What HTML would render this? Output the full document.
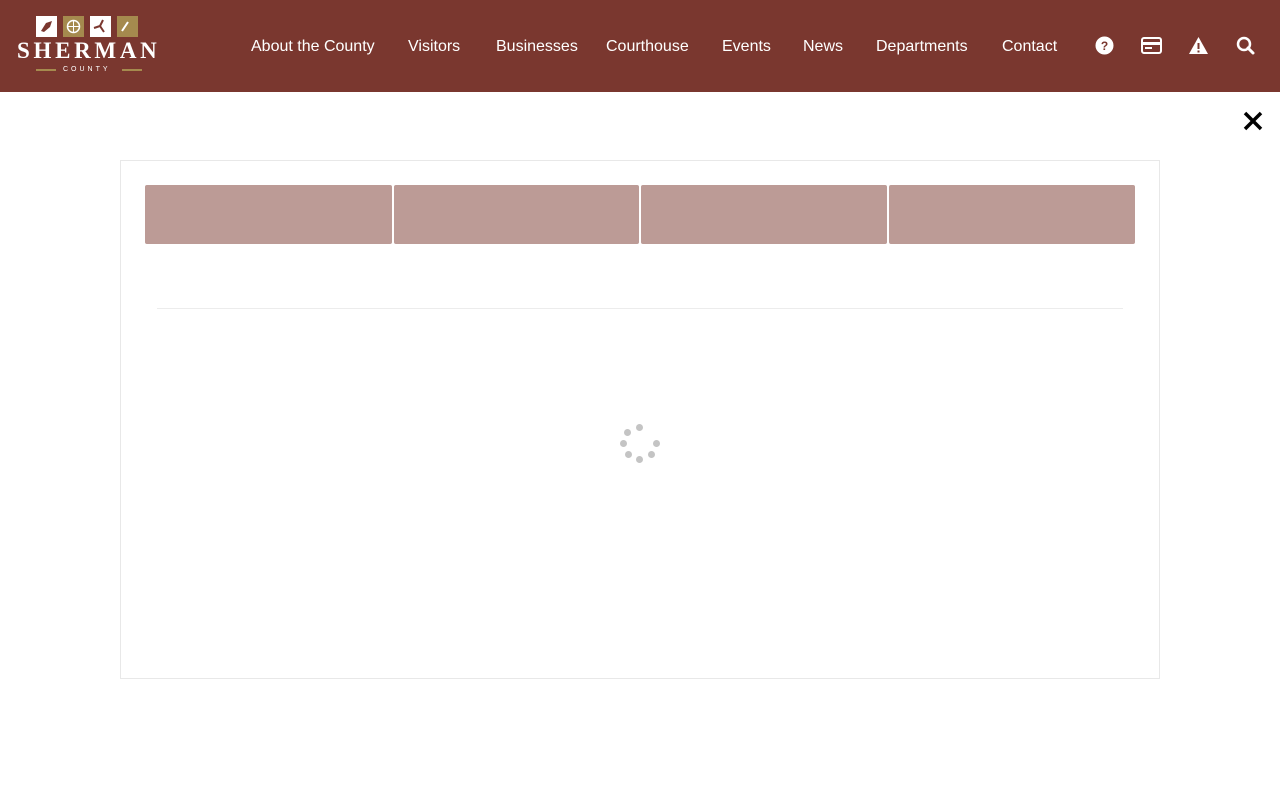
<!DOCTYPE html>
<html><head><meta charset="utf-8"><style>
*{margin:0;padding:0;box-sizing:border-box}
body{width:1280px;height:800px;background:#fff;font-family:"Liberation Sans",sans-serif;position:relative;overflow:hidden}
.hdr{position:absolute;left:0;top:0;width:1280px;height:92px;background:#7a372f}
.nav a{position:absolute;top:38px;color:#fff;font-size:16px;text-decoration:none;white-space:nowrap}
.box{position:absolute;left:120px;top:160px;width:1040px;height:519px;border:1px solid #e8e8e8}
.tab{position:absolute;top:185px;height:59px;background:#bc9b96;border-radius:2px}
.dot{position:absolute;width:7px;height:7px;border-radius:50%;background:#c4c4c4}
</style></head><body>
<div class="hdr">
<div style="position:absolute;left:36px;top:16px;width:21px;height:21px;background:#fff"></div>
<div style="position:absolute;left:63px;top:16px;width:21px;height:21px;background:#a58a4e"></div>
<div style="position:absolute;left:90px;top:16px;width:21px;height:21px;background:#fff"></div>
<div style="position:absolute;left:117px;top:16px;width:21px;height:21px;background:#a58a4e"></div>
<svg style="position:absolute;left:36px;top:16px" width="102" height="21"><path d="M5 15 L10 7 L16 5 L14 11 L8 16Z" fill="#7a372f"/><circle cx="37.5" cy="10.5" r="6" fill="none" stroke="#fff" stroke-width="1.5"/><path d="M31.5 10.5h12M37.5 4.5v12" stroke="#fff"/><path d="M58 12 L64 10 L67 4 M64 10 L68 16" stroke="#7a372f" stroke-width="2" fill="none"/><path d="M86 15 L92 6" stroke="#fff" stroke-width="2"/></svg>
<div style="position:absolute;left:17px;top:38px;color:#fff;font-family:'Liberation Serif',serif;font-weight:bold;font-size:23px;letter-spacing:3.7px">SHERMAN</div>
<div style="position:absolute;left:63px;top:66px;color:#fff;font-size:7px;letter-spacing:3px">COUNTY</div>
<div style="position:absolute;left:36px;top:69px;width:20px;height:2px;background:#a58a4e"></div>
<div style="position:absolute;left:122px;top:69px;width:20px;height:2px;background:#a58a4e"></div>
<div class="nav">
<a style="left:251px">About the County</a><a style="left:408px">Visitors</a><a style="left:496px">Businesses</a><a style="left:606px">Courthouse</a><a style="left:722px">Events</a><a style="left:803px">News</a><a style="left:876px">Departments</a><a style="left:1002px">Contact</a>
</div>
<svg style="position:absolute;left:1094px;top:35px" width="170" height="22">
<circle cx="10.5" cy="10.5" r="9" fill="#fff"/><text x="10.5" y="15" text-anchor="middle" font-size="12" font-weight="bold" fill="#7a372f" font-family="Liberation Sans">?</text>
<rect x="48" y="3" width="19" height="15" rx="2" fill="none" stroke="#fff" stroke-width="2"/><rect x="48" y="7" width="19" height="3" fill="#fff"/><rect x="51" y="12" width="7" height="2" fill="#fff"/>
<path d="M104.5 2 L114 19 L95 19Z" fill="#fff"/><rect x="103.5" y="8" width="2" height="6" fill="#7a372f"/><rect x="103.5" y="15.5" width="2" height="2" fill="#7a372f"/>
<circle cx="150" cy="9" r="6" fill="none" stroke="#fff" stroke-width="2.5"/><path d="M154 13 L159 18" stroke="#fff" stroke-width="3" stroke-linecap="round"/>
</svg>
</div>
<svg style="position:absolute;left:1242px;top:110px" width="22" height="22"><path d="M3 3L19 19M19 3L3 19" stroke="#000" stroke-width="3.5"/></svg>
<div class="box"></div>
<div class="tab" style="left:145px;width:247px"></div>
<div class="tab" style="left:394px;width:245px"></div>
<div class="tab" style="left:641px;width:246px"></div>
<div class="tab" style="left:889px;width:246px"></div>
<div style="position:absolute;left:157px;top:308px;width:966px;height:1px;background:#ececec"></div>
<div class="dot" style="left:636px;top:424px"></div>
<div class="dot" style="left:624px;top:429px"></div>
<div class="dot" style="left:620px;top:440px"></div>
<div class="dot" style="left:625px;top:451px"></div>
<div class="dot" style="left:636px;top:456px"></div>
<div class="dot" style="left:648px;top:451px"></div>
<div class="dot" style="left:653px;top:440px"></div>
</body></html>
